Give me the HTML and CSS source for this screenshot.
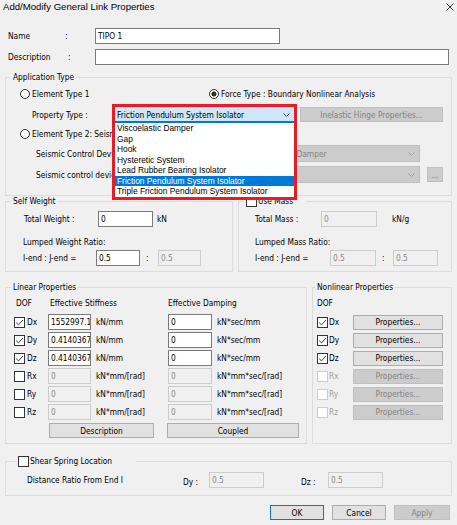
FILE: index.html
```html
<!DOCTYPE html>
<html>
<head>
<meta charset="utf-8">
<title>Add/Modify General Link Properties</title>
<link rel="stylesheet" href="styles.css">
</head>
<body>
<div class="dialog">
  <div class="titlebar">
    <span class="title">Add/Modify General Link Properties</span>
    <svg class="close" viewBox="0 0 8 8"><path d="M0.5 0.5 L7.5 7.5 M7.5 0.5 L0.5 7.5" stroke="#222" stroke-width="0.9" fill="none"/></svg>
  </div>
  <div class="content">
    <div class="frow">
      <span class="flabel">Name</span><span class="fcolon">:</span>
      <span class="tb w-name">TIPO 1</span>
    </div>
    <div class="frow r-desc">
      <span class="flabel flabel-desc">Description</span><span class="fcolon fcolon-desc">:</span>
      <span class="tb w-desc"></span>
    </div>

    <fieldset class="grp g-app">
      <legend>Application Type</legend>
      <div class="app-body">
        <div class="arow a1">
          <span class="opt opt-e1"><span class="radio"></span>Element Type 1</span>
          <span class="opt"><span class="radio on"></span>Force Type : Boundary Nonlinear Analysis</span>
        </div>
        <div class="arow a2">
          <span class="plabel">Property Type :</span>
          <span class="combo c-prop"><span class="ctext">Friction Pendulum System Isolator</span><svg class="chev" viewBox="0 0 7 4"><path d="M0.5 0.5 L3.5 3.5 L6.5 0.5" fill="none" stroke="#333" stroke-width="0.9"/></svg></span>
          <span class="btn dis b-hinge">Inelastic Hinge Properties...</span>
        </div>
        <div class="arow a3">
          <span class="opt"><span class="radio"></span>Element Type 2: Seismic Control Device</span>
        </div>
        <div class="arow a4">
          <span class="slabel">Seismic Control Device Type :</span>
          <span class="combo dis c-seis"><span class="ctext">Viscous Damper</span><svg class="chev" viewBox="0 0 7 4"><path d="M0.5 0.5 L3.5 3.5 L6.5 0.5" fill="none" stroke="#9a9a9a" stroke-width="0.9"/></svg></span>
        </div>
        <div class="arow a5">
          <span class="slabel">Seismic control device Property :</span>
          <span class="combo dis c-seis"><span class="ctext"></span><svg class="chev" viewBox="0 0 7 4"><path d="M0.5 0.5 L3.5 3.5 L6.5 0.5" fill="none" stroke="#9a9a9a" stroke-width="0.9"/></svg></span>
          <span class="btn dis b-dots">...</span>
        </div>
      </div>
    </fieldset>

    <div class="wrow">
      <fieldset class="grp g-self">
        <legend>Self Weight</legend>
        <div class="sw-body">
          <div class="srow">
            <span class="sl-tw">Total Weight :</span>
            <span class="tb w55">0</span>
            <span class="unit-kn">kN</span>
          </div>
          <div class="lumped">Lumped Weight Ratio:</div>
          <div class="srow r-ij">
            <span class="sl-ij">I-end : J-end =</span>
            <span class="tb w44">0.5</span>
            <span class="ij-colon">:</span>
            <span class="tb dis w43">0.5</span>
          </div>
        </div>
      </fieldset>
      <fieldset class="grp g-mass">
        <legend class="chk-legend chk-legend-mass"><span class="chk"></span>Use Mass</legend>
        <div class="ms-body">
          <div class="srow">
            <span class="ml-tm">Total Mass :</span>
            <span class="tb dis w56">0</span>
            <span class="unit-kng">kN/g</span>
          </div>
          <div class="lumped">Lumped Mass Ratio:</div>
          <div class="srow r-ij">
            <span class="ml-ij">I-end : J-end =</span>
            <span class="tb dis w46">0.5</span>
            <span class="ij-colon ij-colon-m">:</span>
            <span class="tb dis w45">0.5</span>
          </div>
        </div>
      </fieldset>
    </div>

    <div class="lrow">
      <fieldset class="grp g-lin">
        <legend>Linear Properties</legend>
        <div class="lin-body">
          <div class="lhead">
            <span class="h-dof">DOF</span>
            <span class="h-stiff">Effective Stiffness</span>
            <span class="h-damp">Effective Damping</span>
          </div>
          <div class="lin-row first">
            <span class="dofc"><span class="chk on"><svg viewBox="0 0 9 9"><path d="M1.2 4.6 L3.5 6.9 L7.9 2" fill="none" stroke="#222" stroke-width="0.9"/></svg></span>Dx</span>
            <span class="tb w43 num">1552997.13</span><span class="u1">kN/mm</span>
            <span class="tb w44">0</span><span class="u2">kN*sec/mm</span>
          </div>
          <div class="lin-row">
            <span class="dofc"><span class="chk on"><svg viewBox="0 0 9 9"><path d="M1.2 4.6 L3.5 6.9 L7.9 2" fill="none" stroke="#222" stroke-width="0.9"/></svg></span>Dy</span>
            <span class="tb w43 num">0.4140367</span><span class="u1">kN/mm</span>
            <span class="tb w44">0</span><span class="u2">kN*sec/mm</span>
          </div>
          <div class="lin-row">
            <span class="dofc"><span class="chk on"><svg viewBox="0 0 9 9"><path d="M1.2 4.6 L3.5 6.9 L7.9 2" fill="none" stroke="#222" stroke-width="0.9"/></svg></span>Dz</span>
            <span class="tb w43 num">0.4140367</span><span class="u1">kN/mm</span>
            <span class="tb w44">0</span><span class="u2">kN*sec/mm</span>
          </div>
          <div class="lin-row">
            <span class="dofc"><span class="chk"></span>Rx</span>
            <span class="tb dis w43">0</span><span class="u1">kN*mm/[rad]</span>
            <span class="tb dis w44">0</span><span class="u2">kN*mm*sec/[rad]</span>
          </div>
          <div class="lin-row">
            <span class="dofc"><span class="chk"></span>Ry</span>
            <span class="tb dis w43">0</span><span class="u1">kN*mm/[rad]</span>
            <span class="tb dis w44">0</span><span class="u2">kN*mm*sec/[rad]</span>
          </div>
          <div class="lin-row">
            <span class="dofc"><span class="chk"></span>Rz</span>
            <span class="tb dis w43">0</span><span class="u1">kN*mm/[rad]</span>
            <span class="tb dis w44">0</span><span class="u2">kN*mm*sec/[rad]</span>
          </div>
          <div class="lbtns">
            <span class="btn b-desc">Description</span>
            <span class="btn b-coup">Coupled</span>
          </div>
        </div>
      </fieldset>
      <fieldset class="grp g-non">
        <legend class="leg-non">Nonlinear Properties</legend>
        <div class="non-body">
          <div class="lhead"><span>DOF</span></div>
          <div class="non-row first">
            <span class="ndof"><span class="chk on"><svg viewBox="0 0 9 9"><path d="M1.2 4.6 L3.5 6.9 L7.9 2" fill="none" stroke="#222" stroke-width="0.9"/></svg></span>Dx</span>
            <span class="btn b-prop">Properties...</span>
          </div>
          <div class="non-row">
            <span class="ndof"><span class="chk on"><svg viewBox="0 0 9 9"><path d="M1.2 4.6 L3.5 6.9 L7.9 2" fill="none" stroke="#222" stroke-width="0.9"/></svg></span>Dy</span>
            <span class="btn b-prop">Properties...</span>
          </div>
          <div class="non-row">
            <span class="ndof"><span class="chk on"><svg viewBox="0 0 9 9"><path d="M1.2 4.6 L3.5 6.9 L7.9 2" fill="none" stroke="#222" stroke-width="0.9"/></svg></span>Dz</span>
            <span class="btn b-prop">Properties...</span>
          </div>
          <div class="non-row">
            <span class="ndof dis"><span class="chk dis"></span>Rx</span>
            <span class="btn dis b-prop">Properties...</span>
          </div>
          <div class="non-row">
            <span class="ndof dis"><span class="chk dis"></span>Ry</span>
            <span class="btn dis b-prop">Properties...</span>
          </div>
          <div class="non-row">
            <span class="ndof dis"><span class="chk dis"></span>Rz</span>
            <span class="btn dis b-prop">Properties...</span>
          </div>
        </div>
      </fieldset>
    </div>

    <fieldset class="grp g-shear">
      <legend class="chk-legend chk-legend-shear"><span class="chk"></span>Shear Spring Location</legend>
      <div class="sh-body">
        <span class="dist">Distance Ratio From End I</span>
        <span class="dyl">Dy :</span>
        <span class="tb dis w55">0.5</span>
        <span class="dzl">Dz :</span>
        <span class="tb dis w55">0.5</span>
      </div>
    </fieldset>

    <div class="foot">
      <span class="btn b-ok">OK</span>
      <span class="btn b-cancel">Cancel</span>
      <span class="btn dis b-apply">Apply</span>
    </div>
  </div>

  <div class="popup">
    <div class="pcombo"><span class="ctext">Friction Pendulum System Isolator</span><svg class="chev" viewBox="0 0 7 4"><path d="M0.5 0.5 L3.5 3.5 L6.5 0.5" fill="none" stroke="#333" stroke-width="0.9"/></svg></div>
    <div class="plist">
      <div class="pitem">Viscoelastic Damper</div>
      <div class="pitem">Gap</div>
      <div class="pitem">Hook</div>
      <div class="pitem">Hysteretic System</div>
      <div class="pitem">Lead Rubber Bearing Isolator</div>
      <div class="pitem sel">Friction Pendulum System Isolator</div>
      <div class="pitem">Triple Friction Pendulum System Isolator</div>
    </div>
  </div>
</div>
</body>
</html>
```

FILE: styles.css
```css
* { box-sizing: border-box; }
html, body { margin: 0; padding: 0; }
body {
  background: #f0f0f0;
  font-family: "DejaVu Sans Condensed", "Liberation Sans", sans-serif;
  font-size: 8.3px;
  color: #000;
}
.dialog {
  position: relative;
  width: 457px;
  height: 525px;
  overflow: hidden;
  background: #f0f0f0;
}
.titlebar { display: flex; height: 28px; }
.title {
  font-family: "Liberation Sans", sans-serif;
  font-size: 9.6px;
  line-height: 13px;
  margin-left: 3px;
}
.close { margin-left: auto; margin-right: 3px; margin-top: 3px; width: 8px; height: 8px; }

.content { padding: 0 5px; }

.frow { display: flex; align-items: center; height: 16px; }
.r-desc { margin-top: 5px; }
.flabel { width: 60px; padding-left: 3px; }
.fcolon { width: 30px; }
.flabel-desc { width: 63px; }
.fcolon-desc { width: 27px; }

.tb {
  display: flex;
  align-items: center;
  height: 16px;
  border: 1px solid #7a7a7a;
  background: #fff;
  padding: 0 2px;
  white-space: nowrap;
  overflow: hidden;
  flex: none;
}
.tb.dis { border-color: #cccccc; background: #f0f0f0; color: #8a8a8a; }
.w-name { width: 185px; }
.w-desc { width: 354px; }
.w43 { width: 43px; }
.w44 { width: 44px; }
.w45 { width: 45px; }
.w46 { width: 46px; }
.w55 { width: 55px; }
.w56 { width: 56px; }

.grp {
  margin: 0;
  padding: 0;
  border: 1px solid #dcdcdc;
  min-width: 0;
}
.grp > legend {
  padding: 0 2px;
  margin-left: 5px;
  height: 10px;
  line-height: 10px;
}
.chk-legend { display: flex; align-items: center; }
.chk-legend .chk { margin-right: 1px; }
.chk-legend-mass { padding-right: 13px !important; }
.chk-legend-shear { margin-left: 10px !important; padding-right: 24px !important; height: 12px !important; }
.leg-non { margin-left: 2px !important; }

/* Application type */
.g-app { margin-top: 7px; }
.app-body { padding: 6px 0 12px 14px; }
.arow { display: flex; align-items: center; }
.opt { display: flex; align-items: center; white-space: nowrap; }
.opt-e1 { width: 189px; }
.radio {
  width: 10px;
  height: 10px;
  border: 1px solid #333;
  border-radius: 50%;
  background: #fff;
  margin-right: 2px;
  flex: none;
}
.radio.on { background: radial-gradient(circle, #333 0 2.3px, #fff 2.8px); }
.a1 { height: 12px; }
.a2 { height: 15px; margin-top: 7px; }
.a3 { height: 12px; margin-top: 6px; }
.a4 { height: 17px; margin-top: 5px; }
.a5 { height: 17px; margin-top: 4px; }
.plabel { width: 96px; padding-left: 12px; white-space: nowrap; }
.slabel { width: 242px; padding-left: 16px; white-space: nowrap; overflow: hidden; }

.combo {
  display: flex;
  align-items: center;
  height: 14px;
  border: 1px solid #7a7a7a;
  background: #fff;
  padding: 0 4px 0 3px;
  white-space: nowrap;
  overflow: hidden;
  flex: none;
}
.combo.dis { background: #cccccc; border-color: #bfbfbf; color: #838383; }
.ctext { flex: 1; overflow: hidden; }
.chev { width: 7px; height: 4px; flex: none; }
.c-prop { width: 178px; }
.c-seis { width: 158px; height: 17px; }

.btn {
  display: flex;
  align-items: center;
  justify-content: center;
  border: 1px solid #adadad;
  background: #e1e1e1;
  white-space: nowrap;
  flex: none;
}
.btn.dis { background: #cccccc; border-color: #bfbfbf; color: #838383; }
.b-hinge { margin-left: 6px; width: 143px; height: 15px; }
.b-dots { margin-left: 7px; width: 16px; height: 15px; }

/* Self weight / mass */
.wrow { display: flex; gap: 5px; }
.g-self { width: 228px; }
.g-mass { width: 214px; }
.sw-body { padding: 5px 0 5px 17px; }
.ms-body { padding: 5px 0 5px 16px; }
.srow { display: flex; align-items: center; height: 16px; }
.r-ij { margin-top: 3px; }
.lumped { height: 10px; line-height: 10px; margin-top: 10px; }
.sl-tw { width: 75px; padding-left: 1px; }
.sl-ij { width: 73px; }
.unit-kn { margin-left: 4px; }
.ij-colon { width: 18px; padding-left: 6px; }
.ij-colon-m { width: 17px; }
.ml-tm { width: 66px; }
.ml-ij { width: 75px; }
.unit-kng { margin-left: 15px; }

.chk {
  display: inline-flex;
  align-items: center;
  justify-content: center;
  width: 11px;
  height: 11px;
  border: 1px solid #333;
  background: #fff;
  flex: none;
}
.chk svg { width: 9px; height: 9px; }
.chk.dis { border-color: #cccccc; }

/* Linear */
.lrow { display: flex; gap: 5px; margin-top: 10px; }
.g-lin { width: 302px; }
.g-non { width: 140px; }
.lin-body { padding: 6px 0 5px 8px; }
.non-body { padding: 6px 0 5px 4px; }
.lhead { display: flex; height: 10px; line-height: 10px; white-space: nowrap; }
.h-dof { width: 34px; padding-left: 2px; }
.h-stiff { width: 120px; padding-left: 2px; }
.lin-row, .non-row { display: flex; align-items: center; height: 16px; margin-top: 2px; white-space: nowrap; }
.lin-row.first, .non-row.first { margin-top: 6px; }
.dofc { width: 34px; display: flex; align-items: center; }
.dofc .chk { margin-right: 2px; }
.num { font-family: "DejaVu Sans Condensed", "Liberation Sans", sans-serif; }
.u1 { width: 77px; padding-left: 5px; }
.u2 { padding-left: 5px; }
.lbtns { display: flex; margin-top: 3px; height: 15px; }
.b-desc { margin-left: 35px; width: 105px; height: 15px; }
.b-coup { margin-left: 13px; width: 132px; height: 15px; }

.ndof { width: 36px; display: flex; align-items: center; }
.ndof .chk { margin-right: 1px; }
.ndof.dis { color: #a0a0a0; }
.b-prop { width: 90px; height: 15px; }

/* Shear */
.g-shear { margin-top: 11px; }
.sh-body { display: flex; align-items: center; height: 28px; padding: 5px 0 7px 21px; white-space: nowrap; }
.dist { width: 156px; }
.dyl { width: 26px; padding-top: 3px; }
.dzl { width: 27px; margin-left: 37px; padding-top: 3px; }

/* Footer */
.foot { display: flex; justify-content: flex-end; gap: 8px; margin-top: 9px; margin-right: 2px; }
.foot .btn { height: 15px; }
.b-ok { width: 54px; border-color: #0078d7; }
.b-cancel { width: 54px; }
.b-apply { width: 56px; }

/* Open dropdown with red callout */
.popup {
  position: absolute;
  left: 112px;
  top: 104px;
  width: 185px;
  height: 96px;
  border: 3px solid #e81c24;
  background: #fff;
}
.pcombo {
  display: flex;
  align-items: center;
  height: 16px;
  background: #cde6fa;
  border-top: 1px solid #b9d7f0;
  border-bottom: 2px solid #0078d7;
  padding: 0 4px 0 2px;
  white-space: nowrap;
}
.plist { font-family: "Liberation Sans", sans-serif; font-size: 8.4px; }
.pitem { height: 10.5px; line-height: 10.5px; padding-left: 2px; white-space: nowrap; }
.pitem.sel { background: #0078d7; color: #fff; }
```
